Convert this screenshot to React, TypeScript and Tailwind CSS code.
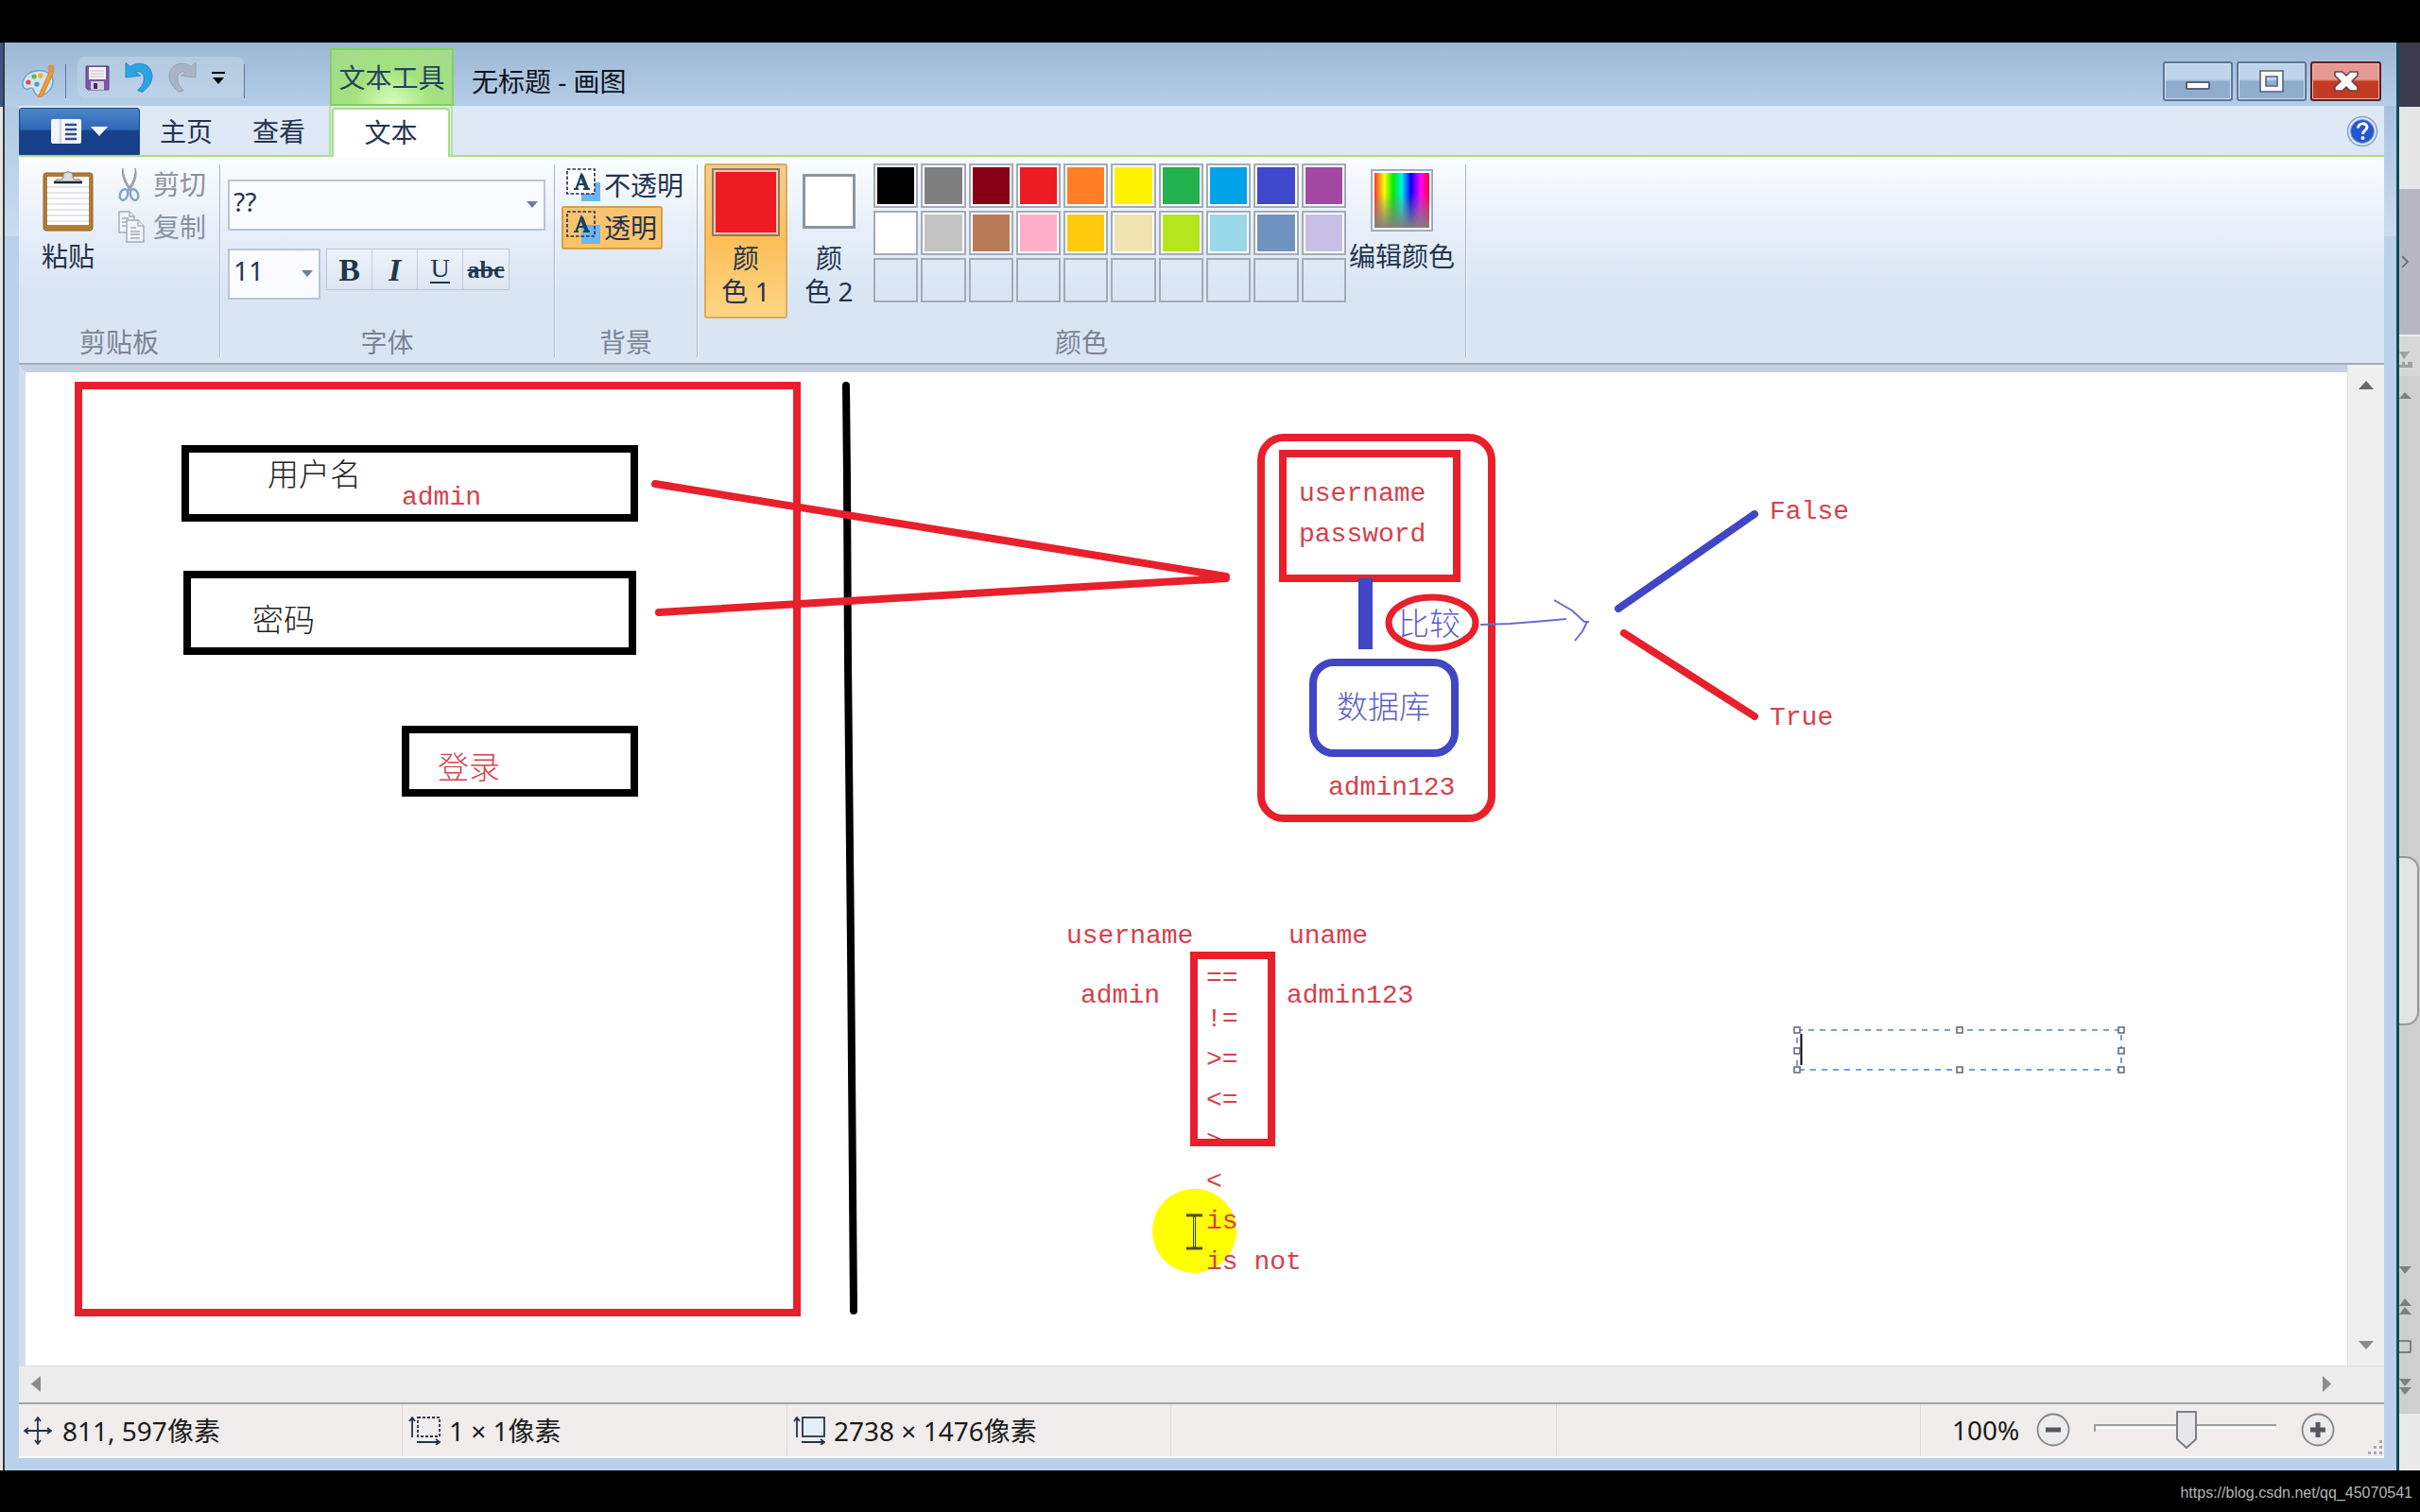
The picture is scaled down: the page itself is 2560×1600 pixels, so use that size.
import type { ReactNode } from "react";

const RED = "#e8202b";
const BLUE = "#4046c4";

function PaletteIcon() {
  return (
    <svg width="36" height="36" viewBox="0 0 36 36" aria-hidden="true">
      <path
        d="M16 7C7 8 1 14 1 21c0 4 3 6 6 5 3-2 5-1 6 2 1 4 4 6 8 5 7-2 12-8 12-15C33 10 25 6 16 7z"
        fill="#cfe6f3"
        stroke="#6fa6c8"
        strokeWidth="1.5"
      />
      <circle cx="7" cy="19" r="2.6" fill="#dd4b43" />
      <circle cx="13" cy="13" r="2.6" fill="#6bb145" />
      <circle cx="20" cy="12" r="2.8" fill="#f0b92d" />
      <circle cx="16" cy="21" r="2.6" fill="#4c9ac8" />
      <path d="M30 6 L34 8 L22 34 L17 35 Z" fill="#ee9a35" stroke="#cf7b25" strokeWidth="0.8" />
      <circle cx="31" cy="4" r="3.6" fill="#dc9256" />
    </svg>
  );
}

function SaveIcon() {
  return (
    <svg width="26" height="27" viewBox="0 0 26 27" aria-hidden="true">
      <path d="M1 1h24v25H3l-2-2z" fill="#7d55a6" stroke="#5d3a86" />
      <rect x="4" y="2" width="18" height="13" fill="#f7f4fb" />
      <path d="M6 6h14M6 9h14M6 12h14" stroke="#c3b6d4" />
      <rect x="6" y="17" width="14" height="9" fill="#cfd2da" />
      <rect x="9" y="19" width="4" height="6" fill="#43336a" />
    </svg>
  );
}

function UndoIcon({ muted = false }: { muted?: boolean }) {
  const fill = muted ? "#a9b5c4" : "#2ca4e2";
  const stroke = muted ? "#93a2b4" : "#2187c6";
  return (
    <svg
      width="30"
      height="34"
      viewBox="0 0 31 34"
      className={muted ? "-scale-x-100" : ""}
      aria-hidden="true"
    >
      <path
        d="M1 1 L1 17 L17 15 L12 11 C17 9 21 13 21 18 C21 23 18 28 14 31 L19 33 C26 28 30 22 30 15 C29 3 17 -2 6 5 Z"
        fill={fill}
        stroke={stroke}
      />
    </svg>
  );
}

function PasteIcon() {
  return (
    <svg width="54" height="66" viewBox="0 0 54 66" aria-hidden="true">
      <rect x="1" y="4" width="52" height="61" rx="3" fill="#b07c37" stroke="#8f6024" />
      <rect x="5" y="8" width="44" height="51" fill="#fff" />
      <path d="M5 19h44M5 25h44M5 31h44M5 37h44M5 43h44M5 49h44M5 55h44" stroke="#c9cdd3" />
      <path d="M12 14h30l-3-3h-5c-2 0-2-3-2-5 0-4-10-4-10 0 0 2 0 5-3 5h-4z" fill="#d9dce0" stroke="#777" />
      <path d="M12 14h30" stroke="#222" strokeWidth="2.5" />
    </svg>
  );
}

function CutIcon() {
  return (
    <svg width="24" height="37" viewBox="0 0 24 37" aria-hidden="true">
      <path d="M5 1 C5 8 9 17 14 24 L12 24 C7 17 3 9 5 1z M18 1 C19 9 15 17 10 24 L12 25 C17 17 21 9 18 1z" fill="#a8afba" stroke="#8d96a3" />
      <ellipse cx="6" cy="29" rx="4" ry="6" fill="none" stroke="#86a3c8" strokeWidth="2.5" transform="rotate(20 6 29)" />
      <ellipse cx="17" cy="29" rx="4" ry="6" fill="none" stroke="#86a3c8" strokeWidth="2.5" transform="rotate(-20 17 29)" />
    </svg>
  );
}

function CopyIcon() {
  return (
    <svg width="28" height="34" viewBox="0 0 28 34" aria-hidden="true">
      <g fill="#f1f4f9" stroke="#a2acb9" strokeWidth="1.4">
        <path d="M1 1h11l5 5v17H1z" />
        <path d="M12 1v5h5M4 8h7M4 12h7M4 16h5" />
        <path d="M9 10h12l6 6v17H9z" />
        <path d="M21 10v6h6M13 18h6M13 22h10M13 25h10M13 29h10" />
      </g>
    </svg>
  );
}

function BackgroundIcon({ opaque = false }: { opaque?: boolean }) {
  return (
    <svg width="37" height="36" viewBox="0 0 37 36" aria-hidden="true">
      <rect x="16" y="15" width="20" height="20" fill="#6fb6f1" />
      {opaque && <rect x="1" y="1" width="29" height="26" fill="#fff" />}
      <rect x="1" y="1" width="29" height="26" fill="none" stroke="#1f2f4d" strokeWidth="1.6" strokeDasharray="3.5 2" />
      <path
        d="M8 22h5M18 22h7M10.500 22 L16 7 L22 22M12.500 17h7"
        fill="none"
        stroke="#22415f"
        strokeWidth="2.2"
      />
      <path d="M16 7 L22 22" stroke="#22415f" strokeWidth="4" />
    </svg>
  );
}

function DownTriangle({ className = "" }: { className?: string }) {
  return (
    <svg width="12" height="7" viewBox="0 0 12 7" className={className} aria-hidden="true">
      <path d="M0 0h12L6 7z" fill="currentColor" />
    </svg>
  );
}

function Group({ label, className, children }: { label: string; className: string; children: ReactNode }) {
  return (
    <section
      aria-label={label}
      className={`mt-2 flex h-[204px] shrink-0 flex-col border-r border-[#aab7c9] shadow-[1px_0_0_#f6f9fd] ${className}`}
    >
      <div className="flex-1">{children}</div>
      <div className="text-center leading-8 text-[#7b8494]">{label}</div>
    </section>
  );
}

const swatches: string[][] = [
  ["bg-black", "bg-[#7f7f7f]", "bg-[#880015]", "bg-[#ed1c24]", "bg-[#ff7f27]", "bg-[#fff200]", "bg-[#22b14c]", "bg-[#00a2e8]", "bg-[#3f48cc]", "bg-[#a349a4]"],
  ["bg-white", "bg-[#c3c3c3]", "bg-[#b97a57]", "bg-[#ffaec9]", "bg-[#ffc90e]", "bg-[#efe4b0]", "bg-[#b5e61d]", "bg-[#99d9ea]", "bg-[#7092be]", "bg-[#c8bfe7]"],
  ["", "", "", "", "", "", "", "", "", ""],
];

function TitleBar() {
  const caption =
    "flex h-[42px] w-[74px] items-center justify-center rounded-[3px] border-2 border-[#5b7798] bg-linear-to-b from-[#bfd4ea] from-45% to-[#8fadcd] to-50% shadow-[inset_0_0_0_1px_#d5e3f1]";
  return (
    <header className="flex h-[67px] items-start bg-linear-to-b from-[#9db8d4] to-[#b5cee8] pl-[18px]">
      <div className="flex h-full w-[326px] items-end pb-2">
        <PaletteIcon />
        <span className="mr-3 ml-[10px] h-9 w-px bg-[#5f7898]" />
        <div className="flex h-11 items-center gap-4 rounded-lg bg-[#c6d7ea]/50 pr-5 pl-2">
          <button aria-label="保存"><SaveIcon /></button>
          <button aria-label="撤消"><UndoIcon /></button>
          <button aria-label="重做"><UndoIcon muted /></button>
          <button aria-label="自定义快速访问工具栏" className="flex flex-col items-center gap-1">
            <span className="h-[2px] w-[14px] bg-black" />
            <DownTriangle className="text-black" />
          </button>
        </div>
        <span className="h-9 w-px bg-[#5f7898]" />
      </div>
      <div className="mt-[6px] flex h-[61px] w-[131px] items-center justify-center border-2 border-b-[#7ed444] border-[#86cf5f] bg-[radial-gradient(ellipse_at_bottom,#d8ffc0_0%,#a4e27d_45%,#a3da90_100%)] text-[#25425c]">
        文本工具
      </div>
      <h1 className="mt-[25px] ml-[19px] leading-8 text-[#10131a]">无标题 - 画图</h1>
      <div className="mt-5 mr-4 ml-auto flex gap-1">
        <button aria-label="最小化" className={caption}>
          <span className="mt-2 h-[9px] w-[26px] rounded-xs border-2 border-[#55657c] bg-white" />
        </button>
        <button aria-label="最大化" className={caption}>
          <svg width="26" height="24" viewBox="0 0 26 24" aria-hidden="true">
            <path d="M1 1h24v22H1zM7 7v10h12V7z" fill="#f7f9fb" fillRule="evenodd" stroke="#55657c" strokeWidth="1.6" />
          </svg>
        </button>
        <button
          aria-label="关闭"
          className="flex h-[42px] w-[75px] items-center justify-center rounded-[3px] border-2 border-[#5c1f22] bg-linear-to-b from-[#e49a90] from-45% to-[#c23b22] to-50% shadow-[inset_0_0_0_1px_#eeb4aa]"
        >
          <svg width="28" height="24" viewBox="0 0 28 24" aria-hidden="true">
            <path
              d="M2 2h8l4 4 4-4h8v4l-6 6 6 6v4h-8l-4-4-4 4H2v-4l6-6-6-6z"
              fill="#fbfbfb"
              stroke="#6d4148"
              strokeWidth="1.6"
              strokeLinejoin="round"
            />
          </svg>
        </button>
      </div>
    </header>
  );
}

function Tabs() {
  return (
    <nav className="flex h-[54px] items-end border-b-2 border-[#a5e080] bg-[#dfe8f6] text-[#25344f]">
      <button
        aria-label="文件"
        className="flex h-[50px] w-[128px] items-center justify-center gap-[10px] rounded-t-[3px] border border-[#1d4688] bg-linear-to-b from-[#4c86c9] from-0% via-[#2f68b5] via-45% to-[#173f8a] to-50%"
      >
        <svg width="32" height="26" viewBox="0 0 32 26" aria-hidden="true">
          <rect width="32" height="26" rx="2" fill="#f3f5f8" />
          <path d="M10 0v26" stroke="#aab4c4" />
          <path d="M15 6h12M15 11h12M15 16h12M15 21h12" stroke="#2e4f86" strokeWidth="2.5" />
        </svg>
        <svg width="18" height="10" viewBox="0 0 18 10" aria-hidden="true">
          <path d="M0 0h18L9 10z" fill="#fff" />
        </svg>
      </button>
      <button className="h-[50px] w-[98px]">主页</button>
      <button className="h-[50px] w-[98px]">查看</button>
      <div className="-mb-[2px] ml-[4px] flex h-[54px] w-[131px] items-end justify-center border-x-2 border-[#b4e39a] px-[1px]">
        <button className="h-[52px] w-full rounded-t-[4px] border-2 border-b-0 border-[#a5e080] bg-white pb-[2px]">文本</button>
      </div>
      <button aria-label="帮助" className="mr-[6px] mb-2 ml-auto">
        <svg width="34" height="34" viewBox="0 0 34 34" aria-hidden="true">
          <circle cx="17" cy="17" r="15.500" fill="#dfe8f6" stroke="#8ba0c4" strokeWidth="1.5" />
          <circle cx="17" cy="17" r="12.500" fill="#2457cf" stroke="#7fa2e8" />
          <path d="M12.500 13.500c0-6 9.500-6 9.500-1 0 3.500-4.500 3.500-4.500 7.500" fill="none" stroke="#fff" strokeWidth="3" />
          <circle cx="17.500" cy="24" r="1.900" fill="#fff" />
        </svg>
      </button>
    </nav>
  );
}

function Ribbon() {
  const fmt = "flex h-full w-12 items-center justify-center border-r border-[#c0cbdc] last:border-r-0";
  return (
    <div className="flex h-[220px] border-b-2 border-[#9fadc1] bg-linear-to-b from-[#fbfdff] via-[#e6eff9] via-35% to-[#dae5f4] to-65% text-[#25344f]">
      <Group label="剪贴板" className="w-[213px]">
        <div className="flex pl-[23px]">
          <button className="flex w-[58px] flex-col items-center gap-2 pt-[5px] leading-9">
            <PasteIcon />
            粘贴
          </button>
          <div className="ml-6 flex flex-col gap-[9px] pt-[3px] text-[#8a93a1]">
            <button className="flex h-9 items-center gap-[9px]" disabled>
              <CutIcon />
              <span className="ml-1">剪切</span>
            </button>
            <button className="flex h-9 items-center gap-[9px]" disabled>
              <CopyIcon />
              复制
            </button>
          </div>
        </div>
      </Group>

      <Group label="字体" className="w-[354px]">
        <div className="flex flex-col gap-[19px] pt-4 pl-2">
          <label className="relative block h-[54px] w-[336px] border-2 border-[#b9c5d8] bg-[#f8fbff]">
            <select aria-label="字体系列" className="h-full w-full appearance-none bg-transparent pb-2 pl-1">
              <option>??</option>
            </select>
            <DownTriangle className="pointer-events-none absolute top-[21px] right-[6px] text-[#6d7f9d]" />
          </label>
          <div className="flex gap-[6px]">
            <label className="relative block h-[54px] w-[98px] border-2 border-[#b9c5d8] bg-[#f8fbff]">
              <select aria-label="字号" className="h-full w-full appearance-none bg-transparent pb-2 pl-1">
                <option>11</option>
              </select>
              <DownTriangle className="pointer-events-none absolute top-[21px] right-[6px] text-[#6d7f9d]" />
            </label>
            <div className="flex h-[44px] border border-[#bcc8d9] bg-linear-to-b from-[#edf3fa] to-[#dde6f2] font-['Liberation_Serif',serif] text-[34px] text-[#22364f]">
              <button aria-label="加粗" className={`${fmt} font-bold`}>B</button>
              <button aria-label="倾斜" className={`${fmt} font-bold italic`}>I</button>
              <button aria-label="下划线" className={fmt}>
                <span className="border-b-2 border-[#22364f] text-[28px] leading-7">U</span>
              </button>
              <button aria-label="删除线" className={`${fmt} text-[26px] font-bold line-through`}>abc</button>
            </div>
          </div>
        </div>
      </Group>

      <Group label="背景" className="w-[151px]">
        <div className="flex flex-col items-start pl-[7px]">
          <button className="flex h-[44px] items-center gap-[3px] pl-[5px] whitespace-nowrap">
            <BackgroundIcon opaque />
            不透明
          </button>
          <button className="flex h-[46px] w-[107px] items-center gap-[3px] rounded-[3px] border-2 border-[#d3a04c] bg-linear-to-b from-[#f7c474] to-[#fdc468] pl-[3px] whitespace-nowrap">
            <BackgroundIcon />
            透明
          </button>
        </div>
      </Group>

      <Group label="颜色" className="w-[813px]">
        <div className="-mt-px flex pl-[7px]">
          <button className="flex h-[164px] w-[88px] flex-col items-center rounded-[3px] border-2 border-[#d9ab5e] bg-linear-to-b from-[#f3cd8c] via-[#fdbf58] to-[#fed584] pt-[3px] leading-[35px]">
            <span className="mb-[6px] h-[72px] w-[72px] shrink-0 border-2 border-[#8d7a62] bg-[#ed1c24] shadow-[inset_0_0_0_2px_#f5c9a8]" />
            <span>颜<br />色 1</span>
          </button>
          <button className="flex w-[88px] flex-col items-center pt-[11px] leading-[35px]">
            <span className="mb-[14px] h-[58px] w-[56px] shrink-0 border-[3px] border-[#8b96a4] bg-white" />
            <span>颜<br />色 2</span>
          </button>
          <div className="ml-[3px] grid w-[500px] grid-cols-10 gap-[3px] self-start">
            {swatches.flat().map((fill, i) => (
              <button
                key={i}
                aria-label={`色块 ${i + 1}`}
                className={`h-[47px] border-2 border-[#a3abb8] ${fill} ${fill ? "shadow-[inset_0_0_0_2px_#fff]" : ""}`}
              />
            ))}
          </div>
          <button className="ml-[2px] flex w-[114px] flex-col items-center gap-2 pt-[6px] leading-9 whitespace-nowrap">
            <span className="h-[66px] w-[66px] border-2 border-[#a3abb8] bg-white p-[2px]">
              <span className="block h-full w-full bg-[linear-gradient(to_bottom,transparent_35%,#808080),linear-gradient(to_right,#f33_0%,#ff0_18%,#0e0_34%,#0ee_50%,#00f_66%,#f0f_84%,#f03_100%)]" />
            </span>
            编辑颜色
          </button>
        </div>
      </Group>
    </div>
  );
}

type Note = { text: string; pos: string; cjk?: boolean; color?: string };

/* Text placed on the drawing surface, positioned from the canvas origin. */
const notes: Note[] = [
  { text: "用户名", pos: "left-[256px] top-[85px]", cjk: true, color: "text-[#222]" },
  { text: "admin", pos: "left-[398px] top-[111px]" },
  { text: "密码", pos: "left-[240px] top-[239px]", cjk: true, color: "text-[#222]" },
  { text: "登录", pos: "left-[436px] top-[395px]", cjk: true },
  { text: "username\npassword", pos: "left-[1347px] top-[107px]" },
  { text: "比较", pos: "left-[1452px] top-[243px]", cjk: true, color: "text-[#5b5fc4]" },
  { text: "数据库", pos: "left-[1387px] top-[331px]", cjk: true, color: "text-[#5b5fc4]" },
  { text: "admin123", pos: "left-[1378px] top-[418px]" },
  { text: "False", pos: "left-[1845px] top-[126px]" },
  { text: "True", pos: "left-[1845px] top-[344px]" },
  { text: "username", pos: "left-[1101px] top-[575px]" },
  { text: "uname", pos: "left-[1336px] top-[575px]" },
  { text: "admin", pos: "left-[1116px] top-[638px]" },
  { text: "admin123", pos: "left-[1334px] top-[638px]" },
  { text: "==\n!=\n>=\n<=\n>\n<", pos: "left-[1249px] top-[620px]" },
  { text: "is\nis not", pos: "left-[1249px] top-[877px]" },
];

const handles: [number, number][] = [
  [1901, 1090], [2073, 1090], [2244, 1090],
  [1901, 1112], [2244, 1112],
  [1901, 1132], [2073, 1132], [2244, 1132],
];

function Canvas() {
  return (
    <div className="relative flex-1 overflow-hidden bg-white">
      <div className="absolute top-[864px] left-[1192px] h-[89px] w-[89px] rounded-full bg-[#ffff00]" />
      {notes.map((n, i) => (
        <p
          key={i}
          className={`absolute leading-[43px] whitespace-pre ${n.pos} ${n.color ?? "text-[#d4414e]"} ${
            n.cjk
              ? "font-['Noto_Sans_CJK_SC',sans-serif] text-[33px] font-light"
              : "font-['Liberation_Mono',monospace] text-[28px]"
          }`}
        >
          {n.text}
        </p>
      ))}
      <svg className="absolute inset-0 h-full w-full" aria-hidden="true">
        <g transform="translate(-27 -394)" fill="none">
          <g stroke={RED} strokeWidth="8">
            <rect x="83" y="408" width="760" height="981" />
            <rect x="1263" y="1011" width="82" height="198" />
            <rect x="1334" y="463" width="244" height="403" rx="24" />
            <rect x="1357" y="480" width="184" height="132" />
          </g>
          <g stroke="#000" strokeWidth="8">
            <rect x="196" y="475" width="475" height="73" />
            <rect x="198" y="608" width="471" height="81" />
            <rect x="429" y="772" width="242" height="67" />
            <path d="M895 408 L896 505 L897 700 L900 1000 L903 1387" strokeLinecap="round" />
          </g>
          <path d="M693 512 L1297 610 M697 648 L1297 612 M1718 670 L1856 758" stroke={RED} strokeWidth="8" strokeLinecap="round" />
          <path d="M1712 644 L1856 544" stroke={BLUE} strokeWidth="8" strokeLinecap="round" />
          <path d="M1444.500 612 V687" stroke={BLUE} strokeWidth="15" />
          <ellipse cx="1515" cy="659" rx="46" ry="27" stroke={RED} strokeWidth="7" />
          <rect x="1389" y="701" width="150" height="96" rx="22" stroke={BLUE} strokeWidth="8" />
          <path d="M1566 661 L1597 660 L1623 658 L1657 655 M1644 635 L1663 646 L1676 658 L1681 658 M1679 658 L1674 668 L1666 678" stroke="#6a6ccc" strokeWidth="2" />
          <path d="M1255 1286h17M1255 1321h17M1263.500 1286v35" stroke="#4d4d20" strokeWidth="3" />
          <path d="M1263.500 1288v31" stroke="#ddd" strokeWidth="1" />
          <rect x="1901" y="1090" width="343" height="42" stroke="#7ba0cf" strokeWidth="2" strokeDasharray="6 6" />
          <path d="M1905.500 1094v33" stroke="#000" strokeWidth="2" />
          {handles.map(([x, y]) => (
            <rect key={`${x}-${y}`} x={x - 3} y={y - 3} width="6" height="6" fill="#fff" stroke="#5d6673" strokeWidth="1.5" />
          ))}
        </g>
      </svg>
      <input
        type="text"
        aria-label="文本框"
        className="absolute top-[698px] left-[1876px] h-[38px] w-[340px] bg-transparent px-1 outline-none"
      />
    </div>
  );
}

function Workspace() {
  return (
    <div className="flex min-h-0 flex-1 flex-col bg-[#ececec]">
      <div className="flex min-h-0 flex-1">
        <div className="flex flex-1 border-t-8 border-l-[7px] border-t-[#c6d0df] border-l-[#d3dcea]">
          <Canvas />
        </div>
        <div className="flex w-[39px] flex-col items-center justify-between border-l border-[#e2e2e2] bg-[#efefef] py-[17px]">
          <svg width="16" height="9" viewBox="0 0 16 9" aria-hidden="true"><path d="M0 9h16L8 0z" fill="#6b6b6b" /></svg>
          <svg width="16" height="9" viewBox="0 0 16 9" aria-hidden="true"><path d="M0 0h16L8 9z" fill="#8b8b8b" /></svg>
        </div>
      </div>
      <div className="flex h-[39px] items-center justify-between border-t border-[#dedede] pr-[56px] pb-[2px] pl-[13px]">
        <svg width="10" height="17" viewBox="0 0 10 17" aria-hidden="true"><path d="M10 0v17L0 8.500z" fill="#8b8b8b" /></svg>
        <svg width="9" height="17" viewBox="0 0 9 17" aria-hidden="true"><path d="M0 0v17l9-8.500z" fill="#8b8b8b" /></svg>
      </div>
    </div>
  );
}

function SizeIcon({ dashed = false }: { dashed?: boolean }) {
  return (
    <svg width="34" height="30" viewBox="0 0 34 30" fill="none" stroke="#26334a" aria-hidden="true">
      <path d="M4 22V2M1 5l3-4 3 4" strokeWidth="1.800" />
      <rect
        x="10"
        y="1"
        width="23"
        height="20"
        strokeWidth="1.8"
        fill={dashed ? "none" : "#e4eef8"}
        strokeDasharray={dashed ? "3 2" : undefined}
      />
      <path d="M9 27h23M29 24l4 3-4 3" strokeWidth="1.800" />
    </svg>
  );
}

function RoundButton({ label, plus = false }: { label: string; plus?: boolean }) {
  return (
    <button aria-label={label}>
      <svg width="36" height="36" viewBox="0 0 36 36" aria-hidden="true">
        <circle cx="18" cy="18" r="16.500" fill="#ececec" stroke="#85888c" strokeWidth="1.800" />
        <path d={plus ? "M10 18h16M18 10v16" : "M10 18h16"} stroke="#54585e" strokeWidth="5" />
      </svg>
    </button>
  );
}

function StatusBar() {
  const cell = "flex items-center border-r border-[#dcd9d9]";
  return (
    <footer className="flex h-[59px] items-stretch border-t-2 border-b-2 border-t-[#a3a3a3] border-b-white bg-[#f0edec] leading-9 text-[#1b1b1b]">
      <div className={`${cell} w-[406px] gap-[11px] pl-[5px]`}>
        <svg width="30" height="30" viewBox="0 0 30 30" fill="none" stroke="#26334a" strokeWidth="1.8" aria-hidden="true">
          <path d="M15 1v28M1 15h28M12 5l3-4 3 4M12 25l3 4 3-4M5 12l-4 3 4 3M25 12l4 3-4 3" />
        </svg>
        811, 597像素
      </div>
      <div className={`${cell} w-[407px] gap-[9px] pl-[6px]`}>
        <SizeIcon dashed />
        1 × 1像素
      </div>
      <div className={`${cell} w-[406px] gap-[9px] pl-[6px]`}>
        <SizeIcon />
        2738 × 1476像素
      </div>
      <div className={`${cell} w-[408px]`} />
      <div className={`${cell} flex-1`} />
      <div className="relative flex w-[490px] items-center pb-[2px] pl-[33px]">
        <span className="w-[89px]">100%</span>
        <RoundButton label="缩小" />
        <div className="relative mx-[25px] h-10 w-[194px]">
          <svg width="194" height="40" viewBox="0 0 194 40" aria-hidden="true">
            <path d="M1 22v-7h192" fill="none" stroke="#9da0a4" strokeWidth="2" />
            <path d="M2 18h190" stroke="#fff" strokeWidth="2" />
            <path d="M88 1h20v29l-10 9-10-9z" fill="#e6e7e9" stroke="#7d8085" strokeWidth="2" strokeLinejoin="round" />
          </svg>
          <input type="range" aria-label="缩放" defaultValue={50} className="absolute inset-0 h-full w-full opacity-0" />
        </div>
        <RoundButton label="放大" plus />
        <svg width="17" height="18" viewBox="0 0 17 18" className="absolute right-0 bottom-0" aria-hidden="true">
          <path d="M12 1h3v3h-3zM6 7h3v3H6zM12 7h3v3h-3zM0 13h3v3H0zM6 13h3v3H6zM12 13h3v3h-3z" fill="#a3aab8" />
        </svg>
      </div>
    </footer>
  );
}

/* Sliver of the application that lies behind the Paint window. */
function BackdropRight() {
  return (
    <div className="flex w-[22px] shrink-0 flex-col bg-[#cfcfcf] text-[#808080]">
      <div className="h-[68px] bg-[#3c3c4e]" />
      <div className="h-[87px] bg-[#e6e6e6]" />
      <div className="flex h-[154px] items-center bg-[#b7b7c2]">
        <svg width="12" height="14" viewBox="0 0 12 14" aria-hidden="true"><path d="M3 1l6 6-6 6" fill="none" stroke="#666" strokeWidth="1.500" /></svg>
      </div>
      <div className="h-[44px] border-t-2 border-[#eee] bg-[#d8d8d8] pt-4">
        <svg width="16" height="18" viewBox="0 0 16 18" aria-hidden="true"><path d="M0 0h11L5 8zM0 17v-3h3v-3h3v3h3v-3h5v6z" fill="#a0a0a0" /></svg>
      </div>
      <svg width="14" height="7" viewBox="0 0 14 7" className="mt-[17px]" aria-hidden="true"><path d="M0 7h13L6 0z" fill="currentColor" /></svg>
      <div className="mt-[484px] h-[179px] w-[21px] rounded-r-[14px] border-2 border-l-0 border-[#999] bg-[#e4e4e4]" />
      <svg width="14" height="138" viewBox="0 0 14 138" className="mt-[255px]" aria-hidden="true">
        <g fill="currentColor">
          <path d="M0 0h13L6 8zM0 42h13L6 34zM0 51h13L6 43zM0 119h13L6 127zM0 128h13L6 136z" />
          <rect x="-4" y="79" width="16" height="12" rx="1" fill="none" stroke="#808080" strokeWidth="2" />
        </g>
      </svg>
      <div className="mt-[18px] flex-1 bg-[#e9e9e9]" />
    </div>
  );
}

export default function App() {
  return (
    <div className="flex min-h-screen flex-col bg-black pt-[45px] font-['Noto_Sans','Noto_Sans_CJK_SC',sans-serif] text-[28px]">
      <div className="flex flex-1">
        <div className="flex w-[3px] flex-col bg-[#e6e6e0]">
          <div className="h-[68px] bg-[#3c5589]" />
        </div>
        <div className="flex min-w-0 flex-1 flex-col border-r-[3px] border-l-2 border-r-[#0f4a5e] border-l-[#333b40] bg-[#b9d1ea]">
          <TitleBar />
          <div className="flex flex-1 pb-[13px]">
            <div className="w-[15px] bg-linear-to-b from-[#b1c9e4] to-[#c8dcf0] bg-[length:100%_138px] bg-no-repeat" />
            <main className="flex min-w-0 flex-1 flex-col">
              <Tabs />
              <Ribbon />
              <Workspace />
              <StatusBar />
            </main>
            <div className="w-[13px] bg-linear-to-b from-[#a6c2e0] to-[#cbdcf0] bg-[length:100%_138px] bg-no-repeat" />
          </div>
        </div>
        <BackdropRight />
      </div>
      <div className="flex h-[44px] items-center justify-end pt-1 pr-2">
        <a href="https://blog.csdn.net/qq_45070541" className="font-['Liberation_Sans',sans-serif] text-[16px] text-[#b4b4b4]">
          https://blog.csdn.net/qq_45070541
        </a>
      </div>
    </div>
  );
}
